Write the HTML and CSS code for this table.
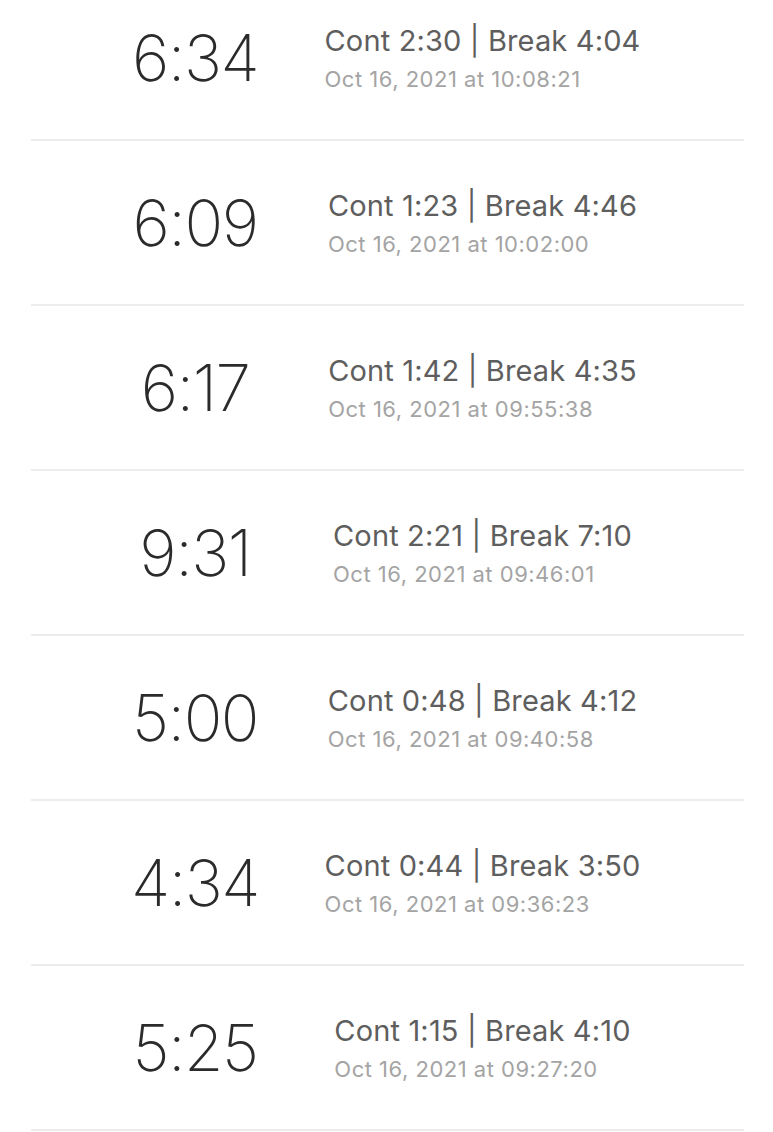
FILE: index.html
```html
<!DOCTYPE html>
<html lang="en">
<head>
<meta charset="utf-8">
<title>Sets</title>
<link rel="stylesheet" href="styles.css">
</head>
<body>
<ul class="list">
  <li class="row"><div class="total">6:34</div><div class="info"><div class="lines"><div class="split">Cont 2:30 | Break 4:04</div><div class="date">Oct 16, 2021 at 10:08:21</div></div></div></li>
  <li class="row"><div class="total">6:09</div><div class="info"><div class="lines"><div class="split">Cont 1:23 | Break 4:46</div><div class="date">Oct 16, 2021 at 10:02:00</div></div></div></li>
  <li class="row"><div class="total">6:17</div><div class="info"><div class="lines"><div class="split">Cont 1:42 | Break 4:35</div><div class="date">Oct 16, 2021 at 09:55:38</div></div></div></li>
  <li class="row"><div class="total">9:31</div><div class="info"><div class="lines"><div class="split">Cont 2:21 | Break 7:10</div><div class="date">Oct 16, 2021 at 09:46:01</div></div></div></li>
  <li class="row"><div class="total">5:00</div><div class="info"><div class="lines"><div class="split">Cont 0:48 | Break 4:12</div><div class="date">Oct 16, 2021 at 09:40:58</div></div></div></li>
  <li class="row"><div class="total">4:34</div><div class="info"><div class="lines"><div class="split">Cont 0:44 | Break 3:50</div><div class="date">Oct 16, 2021 at 09:36:23</div></div></div></li>
  <li class="row"><div class="total">5:25</div><div class="info"><div class="lines"><div class="split">Cont 1:15 | Break 4:10</div><div class="date">Oct 16, 2021 at 09:27:20</div></div></div></li>
</ul>
</body>
</html>
```

FILE: styles.css
```css
html, body {
  margin: 0;
  padding: 0;
  background: #ffffff;
  overflow: hidden;
}
body {
  font-family: Inter, "Noto Sans", sans-serif;
}
.list {
  list-style: none;
  margin: -24px 29px 0 31px;
  padding: 0;
}
.row {
  height: 163px;
  border-bottom: 2px solid #ededed;
  display: flex;
  align-items: center;
  padding-left: 29px;
}
.total {
  width: 270px;
  flex: none;
  text-align: center;
  font-size: 64px;
  font-weight: 150;
  color: #2b2b2b;
  letter-spacing: -1.5px;
}
.info {
  width: 305px;
  flex: none;
  display: flex;
  justify-content: center;
}
.lines {
  display: flex;
  flex-direction: column;
  align-items: flex-start;
  gap: 8px;
}
.split {
  white-space: nowrap;
  font-size: 29px;
  line-height: 34px;
  font-weight: 400;
  color: #5e5e5e;
  letter-spacing: 0.15px;
}
.date {
  white-space: nowrap;
  font-size: 22px;
  line-height: 26px;
  font-weight: 400;
  color: #a4a4a4;
  letter-spacing: 0.5px;
}
```
